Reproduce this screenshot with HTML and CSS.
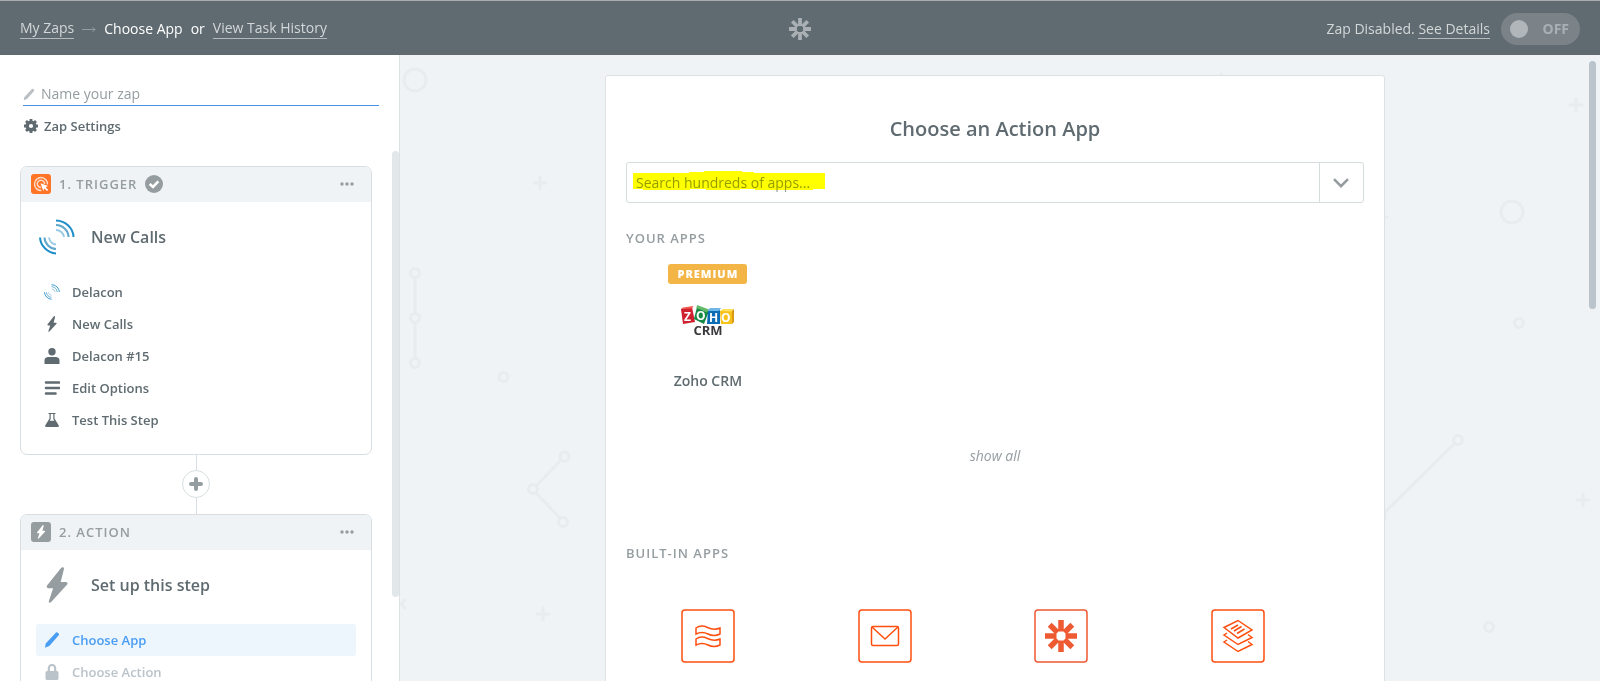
FILE: index.html
```html
<!DOCTYPE html>
<html lang="en">
<head>
  <meta charset="utf-8">
  <title>Zap Editor</title>
  <link rel="stylesheet" href="styles.css">
</head>
<body>

<!-- shared icons -->
<svg class="defs" aria-hidden="true">
  <symbol id="bolt" viewBox="0 0 20 34">
    <path d="M14 .7C14.800 -.3 16.800 .2 16.600 1.600L13.500 14.200H18.500Q20.600 14.400 19.600 16.600L4.500 33Q2.600 34.600 2.200 32.500L6.300 20H1.600Q-.6 19.600 .6 17.500Z"/>
  </symbol>
  <symbol id="delacon" viewBox="0 0 36 36">
    <g fill="none" stroke-width="2">
      <path stroke="#1c8fcb" d="M17 1.500A18 17 0 0 1 34.500 18M1 18.500A18 17 0 0 0 17 34.500"/>
      <path stroke="#5fa6ca" d="M17 6A13 12 0 0 1 29.500 18M5.500 18.500A12 12 0 0 0 17 30"/>
      <path stroke="#9bcbe5" d="M17 11A8 8 0 0 1 25 18M10 18.500A8 8 0 0 0 17 25.500"/>
    </g>
  </symbol>
  <symbol id="pencil" viewBox="0 0 16 16">
    <path d="M11.300 1.200 12 .5Q12.800-.2 13.800.7L14.600 1.600Q15.400 2.400 14.700 3.300L5.300 14 1 15.800 1.700 11.500Z"/>
  </symbol>
  <symbol id="zapier" viewBox="0 0 32 32">
    <g fill="none" stroke="currentColor" stroke-width="5.500">
      <path d="M16 0V11.500M16 20.500V32M0 16H11.500M20.500 16H32M4.700 4.700 12.500 12.500M19.500 19.500 27.300 27.300M27.300 4.700 19.500 12.500M12.500 19.500 4.700 27.300"/>
    </g>
  </symbol>
  <symbol id="dots" viewBox="0 0 14 4">
    <circle cx="2" cy="2" r="1.700"/><circle cx="7" cy="2" r="1.700"/><circle cx="12" cy="2" r="1.700"/>
  </symbol>
</svg>

<header class="topbar">
  <nav class="crumbs">
    <a href="#zaps">My Zaps</a>
    <svg class="arrow" width="14" height="8" viewBox="0 0 14 8"><path d="M0 4.500H13M10.500 2 13 4.500 10.500 7"/></svg>
    <span class="current">Choose App</span>
    <span class="current">or</span>
    <a href="#history">View Task History</a>
  </nav>
  <svg class="logo" width="22" height="22"><use href="#zapier"/></svg>
  <div class="status">
    <span>Zap Disabled. <a href="#details">See Details</a></span>
    <label class="toggle">
      <input type="checkbox" class="knob">
      <span>OFF</span>
    </label>
  </div>
</header>

<div class="editor">

  <aside class="sidebar">
    <label class="zapname">
      <svg width="12" height="13"><use href="#pencil"/></svg>
      <input type="text" placeholder="Name your zap" aria-label="Name your zap">
    </label>
    <button class="settings">
      <svg width="14" height="14" viewBox="0 0 14 14">
        <circle cx="7" cy="7" r="3.800" fill="none" stroke="currentColor" stroke-width="3.400"/>
        <path stroke="currentColor" stroke-width="2.800" d="M7 0V2.500M7 11.500V14M0 7H2.500M11.500 7H14M2 2 3.800 3.800M10.200 10.200 12 12M12 2 10.200 3.800M3.800 10.200 2 12"/>
      </svg>
      Zap Settings
    </button>

    <div class="steps">
      <section class="card">
        <div class="cardhead">
          <svg width="20" height="20" viewBox="0 0 20 20">
            <rect width="20" height="20" rx="3" fill="#ff7427"/>
            <g fill="none" stroke="#ffd9c2" stroke-width="1.500">
              <path d="M10.500 16.500A6.500 6.500 0 1 1 16.500 10.500"/>
              <path d="M10 13.400A3.600 3.600 0 1 1 13.500 10"/>
            </g>
            <path fill="#fff" d="M9.500 9.300 17 12 14.700 13.300 17.200 15.900 16 17.100 13.500 14.500 12.200 16.800Z"/>
          </svg>
          <h2>1. Trigger</h2>
          <svg width="18" height="18" viewBox="0 0 18 18">
            <circle cx="9" cy="9" r="9" fill="#959da0"/>
            <path d="M4.700 9 8 12 13.300 6.300" fill="none" stroke="#fff" stroke-width="2.600"/>
          </svg>
          <button class="more" aria-label="More"><svg width="14" height="4"><use href="#dots"/></svg></button>
        </div>
        <div class="cardtitle">
          <svg width="36" height="36"><use href="#delacon"/></svg>
          <h3>New Calls</h3>
        </div>
        <ul class="items">
          <li><a href="#app"><svg width="16" height="16"><use href="#delacon"/></svg>Delacon</a></li>
          <li><a href="#trigger"><svg width="16" height="16"><use href="#bolt"/></svg>New Calls</a></li>
          <li><a href="#account">
            <svg width="16" height="16" viewBox="0 0 16 16"><circle cx="8" cy="3.700" r="3.700"/><path d="M.5 16V12.500Q.5 9 4.500 9H11.500Q15.500 9 15.500 12.500V16Z"/></svg>
            Delacon #15</a></li>
          <li><a href="#options">
            <svg width="16" height="16" viewBox="0 0 16 16"><path stroke="currentColor" stroke-width="2.600" stroke-linecap="round" d="M2 2.500H15M2 8H15M2 13.500H11.500"/></svg>
            Edit Options</a></li>
          <li><a href="#test">
            <svg width="16" height="16" viewBox="0 0 16 16"><path fill-rule="evenodd" d="M4.500 1H11.500V2H10.500V6.500L14.800 13.500Q15.200 15 13.800 15H2.200Q.8 15 1.200 13.500L5.500 6.500V2H4.500ZM6.700 2V7L5.700 8.800H10.300L9.300 7V2Z"/></svg>
            Test This Step</a></li>
        </ul>
      </section>

      <div class="connector">
        <button aria-label="Add a step">
          <svg width="14" height="14" viewBox="0 0 14 14"><path stroke="currentColor" stroke-width="4" stroke-linecap="round" d="M7 2V12M2 7H12"/></svg>
        </button>
      </div>

      <section class="card">
        <div class="cardhead">
          <svg width="20" height="20" viewBox="0 0 20 20">
            <rect width="20" height="20" rx="3" fill="#959da0"/>
            <use href="#bolt" x="5" y="3" width="10" height="14" fill="#fff"/>
          </svg>
          <h2>2. Action</h2>
          <button class="more" aria-label="More"><svg width="14" height="4"><use href="#dots"/></svg></button>
        </div>
        <div class="cardtitle">
          <svg width="36" height="36"><use href="#bolt"/></svg>
          <h3>Set up this step</h3>
        </div>
        <ul class="items">
          <li class="active"><a href="#choose-app"><svg width="16" height="16"><use href="#pencil"/></svg>Choose App</a></li>
          <li class="locked"><a href="#choose-action">
            <svg width="16" height="16" viewBox="0 0 16 16"><rect x="1.500" y="7" width="13" height="9" rx="1.500"/><path d="M4.800 8V4.500A3.200 3.500 0 0 1 11.200 4.500V8" fill="none" stroke="currentColor" stroke-width="2.200"/></svg>
            Choose Action</a></li>
        </ul>
      </section>
    </div>
    <div class="thumb"></div>
  </aside>

  <main class="main">
    <!-- background doodles -->
    <svg class="doodles left" width="205" height="626" viewBox="400 55 205 626">
      <circle cx="415" cy="80" r="11"/>
      <path d="M534 183H546M540 177V189M537 614H549M543 608V620M395 599 400 604 395 609M405 600 401 604 405 608"/>
      <circle cx="415" cy="273" r="4.500"/><circle cx="415" cy="318" r="4.500"/><circle cx="415" cy="363" r="4.500"/>
      <path d="M415 278V313M415 323V358M561 460 536 486M536 493 560 518"/>
      <circle cx="503.500" cy="377" r="4.500"/>
      <circle cx="564.500" cy="456.500" r="4.500"/><circle cx="533" cy="489" r="4.500"/><circle cx="563" cy="522" r="4.500"/>
    </svg>
    <svg class="doodles right" width="400" height="626" viewBox="1200 55 400 626">
      <path d="M1215 80H1227M1221 74V86M1375 217H1387M1381 211V223M1570 105H1582M1576 99V111M1577 500H1589M1583 494V506"/>
      <circle cx="1512" cy="212" r="11"/>
      <circle cx="1519" cy="323" r="4.500"/><circle cx="1489" cy="627" r="4.500"/>
      <circle cx="1458" cy="440" r="4.500"/><circle cx="1381" cy="516" r="4.500"/>
      <path d="M1454 444 1384 513"/>
    </svg>

    <div class="panel">
      <h1>Choose an Action App</h1>
      <div class="search">
        <input type="text" placeholder="Search hundreds of apps..." aria-label="Search apps">
        <button aria-label="Show apps">
          <svg width="16" height="10" viewBox="0 0 16 10"><path d="M1 1.200 8 8.200 15 1.200" fill="none" stroke="currentColor" stroke-width="2.600"/></svg>
        </button>
        <svg class="marker" width="192" height="20" viewBox="0 0 192 20"><path fill="#ff0" d="M0 2H56V1H71V0H109V1H121V2H192V18H180V19H122V18H107V19H73V18H57V19H10V18H0Z"/></svg>
      </div>

      <h2 class="label">Your Apps</h2>
      <div class="apps">
        <a href="#zoho" class="app">
          <span class="slot"><span class="premium">Premium</span></span>
          <svg width="54" height="54" viewBox="0 0 54 54" role="img" aria-label="Zoho CRM logo">
            <path fill="#cf2030" d="M0 16 11 14 14 29 2 31Z"/><path fill="#ef5a50" d="M0 16 2 14.500 12.500 13 11 15.500Z"/>
            <path fill="#168943" d="M16 14 28 18 23 31 13 26Z"/><path fill="#63bb6a" d="M16 12 28 16.500 26 19.500 15.500 15Z"/>
            <path fill="#0a6db6" d="M27 17H39V31H26Z"/><path fill="#6db6e6" d="M27 17 29 15H40L38 18H27Z"/>
            <path fill="#f8c21c" d="M39 18H51V31H40Z"/><path fill="#ffdf57" d="M39 18 42 16H53L51 18.500Z"/><path fill="#d99a12" d="M51 18 53 16V29L51 31Z"/>
            <g class="zoho">
              <text x="3" y="28">Z</text><text x="15" y="27">O</text><text x="28" y="29">H</text><text x="40" y="29">O</text>
            </g>
            <text class="crm" x="27" y="42">CRM</text>
          </svg>
          <span class="appname">Zoho CRM</span>
        </a>
      </div>
      <button class="showall">show all</button>

      <h2 class="label">Built-in Apps</h2>
      <div class="apps builtin">
        <a href="#formatter" class="app" aria-label="Formatter">
          <span class="slot"></span>
          <svg width="54" height="54" viewBox="0 0 54 54">
            <rect x="1" y="1" width="52" height="52" rx="3"/>
            <path d="M15 19Q20 15.500 26.500 18.500T39 19V25Q33 28 27 25T15 25ZM15 30Q20 26.500 26.500 29.500T39 30V36Q33 39 27 36T15 36Z"/>
          </svg>
        </a>
        <a href="#email" class="app" aria-label="Email">
          <span class="slot"></span>
          <svg width="54" height="54" viewBox="0 0 54 54">
            <rect x="1" y="1" width="52" height="52" rx="3"/>
            <rect x="13.500" y="17.500" width="27" height="19" rx="1.500"/>
            <path d="M14 18 27 30 40 18"/>
          </svg>
        </a>
        <a href="#zapier-app" class="app coral" aria-label="Zapier">
          <span class="slot"></span>
          <svg width="54" height="54" viewBox="0 0 54 54">
            <rect x="1" y="1" width="52" height="52" rx="3"/>
            <use href="#zapier" x="11" y="11" width="32" height="32"/>
          </svg>
        </a>
        <a href="#digest" class="app" aria-label="Digest">
          <span class="slot"></span>
          <svg width="54" height="54" viewBox="0 0 54 54">
            <rect x="1" y="1" width="52" height="52" rx="3"/>
            <path d="M27 11.500 41 21 27 29 13 18.500ZM16 24 13 26 27 35.500 41 28.500 37 25.500M16 31 13 33 27 42.500 41 35.500 37 32.500M20 20 27 16M23 22 30.500 17.500M26 24.500 33.500 20"/>
          </svg>
        </a>
      </div>
    </div>
    <div class="thumb"></div>
  </main>
</div>

</body>
</html>
```
FILE: styles.css
```css
* {
  box-sizing: border-box;
}

body {
  margin: 0;
  height: 100vh;
  display: flex;
  flex-direction: column;
  overflow: hidden;
  font: 600 13px/20px 'Open Sans', sans-serif;
  color: #5f6b70;
  background: #fff;
}

h1, h2, h3, ul {
  margin: 0;
  padding: 0;
  font-weight: 600;
}

a {
  color: inherit;
  text-decoration: none;
}

button {
  padding: 0;
  border: 0;
  background: none;
  font: inherit;
  color: inherit;
  cursor: pointer;
}

svg {
  flex: none;
  display: block;
  fill: currentColor;
}

input {
  min-width: 0;
  border: 0;
  outline: 0;
  background: none;
  font: 400 14px/20px 'Open Sans', sans-serif;
  color: #5f6b70;
}

input::placeholder {
  color: #959da0;
  opacity: 1;
}

.defs {
  display: none;
}

/* top bar */
.topbar {
  flex: none;
  height: 55px;
  padding: 1px 20px 0;
  border-top: 1px solid #a9adaf;
  background: #5f6b70;
  display: grid;
  grid-template-columns: 1fr auto 1fr;
  align-items: center;
  font-size: 14px;
  font-weight: 400;
  color: #d3d7d9;
}

.crumbs {
  display: flex;
  align-items: center;
  gap: 8px;
}

.topbar a {
  border-bottom: 1px solid #b4babc;
}

.arrow {
  fill: none;
  stroke: #939b9f;
}

.current {
  color: #fff;
}

.logo {
  color: #aab0b4;
}

.status {
  display: flex;
  justify-content: flex-end;
  align-items: center;
  gap: 11px;
}

.toggle {
  width: 79px;
  height: 32px;
  padding: 0 11px 0 9px;
  border-radius: 16px;
  background: #7b8388;
  display: flex;
  align-items: center;
  justify-content: space-between;
  font-weight: 700;
  color: #a9b0b4;
}

.knob {
  appearance: none;
  margin: 0;
  width: 18px;
  height: 18px;
  border-radius: 9px;
  background: #b1b6ba;
}

.editor {
  flex: 1;
  min-height: 0;
  display: flex;
}

/* sidebar */
.sidebar {
  position: relative;
  flex: none;
  width: 400px;
  padding: 28px 20px 0;
  border-right: 1px solid #dce1e4;
  overflow: hidden;
}

.zapname {
  display: flex;
  align-items: center;
  gap: 6px;
  height: 23px;
  margin-left: 3px;
  border-bottom: 1px solid #4a90e2;
  color: #b9bfc3;
}

.zapname input {
  flex: 1;
  padding: 0;
}

.settings {
  display: flex;
  align-items: center;
  gap: 6px;
  margin: 10px 0 30px 4px;
}

.steps {
  padding-right: 7px;
}

.card {
  border: 1px solid #d8dee1;
  border-radius: 7px;
  padding-bottom: 17px;
  overflow: hidden;
}

.cardhead {
  display: flex;
  align-items: center;
  gap: 8px;
  height: 35px;
  padding: 0 17px 1px 10px;
  background: #eff3f5;
  color: #959da0;
}

.cardhead h2, .label {
  font-size: 13px;
  line-height: 20px;
  letter-spacing: 1px;
  text-transform: uppercase;
  color: #959da0;
}

.more {
  margin-left: auto;
}

.cardtitle {
  display: flex;
  align-items: center;
  gap: 16px;
  padding: 17px 18px 21px;
}

.cardtitle svg {
  fill: #959da0;
}

.cardtitle h3 {
  font-size: 16px;
}

.items {
  list-style: none;
  padding: 0 15px 1px;
}

.items a {
  display: flex;
  align-items: center;
  gap: 12px;
  height: 32px;
  padding: 0 8px;
  border-radius: 3px;
}

.active a {
  color: #499df3;
  background: #edf5fd;
}

.locked a {
  color: #bac3ca;
}

.connector {
  height: 59px;
  padding-bottom: 1px;
  display: flex;
  align-items: center;
  justify-content: center;
  background: linear-gradient(#d8dee1, #d8dee1) center / 1px 100% no-repeat;
}

.connector button {
  display: flex;
  align-items: center;
  justify-content: center;
  width: 28px;
  height: 28px;
  border: 1px solid #d8dee1;
  border-radius: 14px;
  background: #fff;
  color: #959da0;
}

.thumb {
  position: absolute;
  border-radius: 4px;
}

.sidebar .thumb {
  top: 96px;
  right: 0;
  width: 7px;
  height: 446px;
  background: #e2e7ea;
}

/* main */
.main {
  position: relative;
  flex: 1;
  padding: 20px 10px 0 0;
  background: #eff3f5;
  overflow: hidden;
}

.main .thumb {
  top: 6px;
  right: 4px;
  width: 7px;
  height: 248px;
  background: #bbc4cb;
}

.doodles {
  position: absolute;
  top: 0;
  fill: none;
  stroke: #e8ecee;
  stroke-width: 3px;
  stroke-linecap: round;
}

.doodles.left {
  left: 0;
}

.doodles.right {
  right: 0;
}

.panel {
  position: relative;
  max-width: 780px;
  min-height: 100%;
  margin: 0 auto;
  padding: 38px 20px 40px;
  border: 1px solid #dce1e4;
  border-radius: 3px;
  background: #fff;
}

.panel h1 {
  margin-bottom: 18px;
  font-size: 20px;
  line-height: 30px;
  text-align: center;
}

.search {
  position: relative;
  display: flex;
  height: 41px;
  margin-bottom: 25px;
  border: 1px solid #d5dcde;
  border-radius: 3px;
}

.search input {
  flex: 1;
  padding: 0 9px;
}

.search button {
  display: flex;
  align-items: center;
  justify-content: center;
  width: 44px;
  padding-right: 2px;
  border-left: 1px solid #d5dcde;
  color: #959da0;
}

/* highlighter over the placeholder */
.marker {
  position: absolute;
  left: 6px;
  top: 8px;
  mix-blend-mode: multiply;
  pointer-events: none;
}

.apps {
  display: grid;
  grid-template-columns: repeat(4, 1fr);
  gap: 13px;
  margin: 16px 44px 55px 0;
}

.app {
  display: flex;
  flex-direction: column;
  align-items: center;
}

.slot {
  height: 20px;
  margin-bottom: 9px;
}

.premium {
  display: block;
  padding: 0 9px;
  border-radius: 3px;
  background: #f3b545;
  color: #fff;
  font-size: 11px;
  font-weight: 800;
  letter-spacing: 1px;
  text-transform: uppercase;
}

.zoho {
  fill: #fff;
  font-size: 12px;
  font-weight: 700;
}

.crm {
  fill: #3a3a3c;
  font-size: 13px;
  font-weight: 700;
  text-anchor: middle;
}

.appname {
  margin-top: 24px;
  font-size: 14px;
}

.showall {
  display: block;
  margin: 0 auto 77px;
  font-size: 14px;
  font-weight: 400;
  font-style: italic;
  color: #959da0;
}

.builtin {
  margin-top: 17px;
}

.builtin .app {
  color: #ff4f0f;
}

.builtin svg {
  fill: none;
  stroke: currentColor;
  stroke-width: 1.5px;
}

.builtin .coral {
  color: #ee5a31;
}
```
